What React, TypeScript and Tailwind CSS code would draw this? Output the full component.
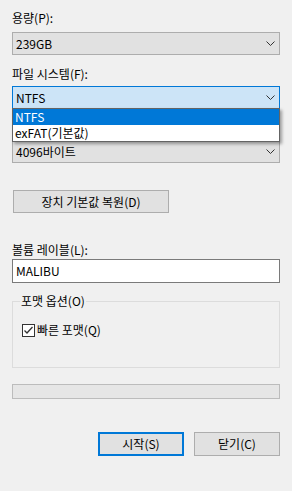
import React from 'react';

const font = "font-['Noto_Sans_CJK_KR','Noto_Sans',sans-serif]";

function Chevron() {
  return (
    <svg width="9" height="5" viewBox="0 0 9 5" className="shrink-0">
      <path d="M0.5 0.5 L4.5 4.5 L8.5 0.5" fill="none" stroke="#333" strokeWidth="1" />
    </svg>
  );
}

function Label({ children, className = '' }: { children?: React.ReactNode; className?: string }) {
  return <div className={`h-[16px] leading-[16px] ${className}`}>{children}</div>;
}

function Combo({ value, className = '' }: { value: string; className?: string }) {
  return (
    <div
      className={`h-[23px] border border-[#adadad] bg-[#e1e1e1] flex items-center justify-between pl-[3px] pr-[4px] ${className}`}
    >
      <span className="leading-[16px]">{value}</span>
      <Chevron />
    </div>
  );
}

export default function App() {
  return (
    <div className={`w-[292px] h-[491px] bg-[#f0f0f0] px-3 pt-[10px] text-[12px] text-black ${font}`}>
      <Label>용량(P):</Label>
      <Combo value="239GB" className="mt-[6px]" />

      <Label className="mt-[11px]">파일 시스템(F):</Label>
      <div className="relative mt-[4px] z-10">
        <div className="h-[23px] border border-[#0078d7] bg-[#cce4f7] flex items-center justify-between pl-[3px] pr-[4px]">
          <span className="leading-[16px]">NTFS</span>
          <Chevron />
        </div>
        {/* open dropdown list, lies over the next row */}
        <div className="absolute left-0 right-0 top-[22px] border border-[#646464] bg-white shadow-[2px_2px_3px_rgba(0,0,0,0.35)]">
          <div className="h-[16px] leading-[16px] bg-[#0078d7] text-white pl-[2px]">NTFS</div>
          <div className="h-[16px] leading-[16px] pl-[2px]">exFAT(기본값)</div>
        </div>
      </div>

      {/* label hidden under the dropdown */}
      <Label className="mt-[11px]" />
      <Combo value="4096바이트" className="mt-[4px]" />

      <button className="block mt-[27px] ml-px w-[156px] h-[23px] border border-[#adadad] bg-[#e1e1e1] leading-[16px]">
        장치 기본값 복원(D)
      </button>

      <Label className="mt-[29px]">볼륨 레이블(L):</Label>
      <div className="mt-[1px] h-[24px] border border-[#7a7a7a] bg-white flex items-center pl-[3px]">
        <span className="leading-[16px]">MALIBU</span>
      </div>

      <div className="relative mt-[18px] h-[67px] border border-[#dcdcdc] pl-[9px] pt-[20px]">
        <span className="absolute -top-[9px] left-[7px] px-[1px] bg-[#f0f0f0] leading-[16px]">포맷 옵션(O)</span>
        <div className="flex items-center gap-[2px]">
          <div className="w-[13px] h-[13px] border border-[#333] bg-white flex items-center justify-center">
            <svg width="11" height="11" viewBox="0 0 11 11">
              <path d="M1.5 5.5 L4 8 L9.5 2" fill="none" stroke="#333" strokeWidth="1.3" />
            </svg>
          </div>
          <span className="leading-[16px]">빠른 포맷(Q)</span>
        </div>
      </div>

      <div className="mt-[16px] h-[15px] border border-[#bcbcbc] bg-[#e6e6e6]" />

      <div className="mt-[33px] flex justify-end gap-[10px]">
        <button className="w-[86px] h-[24px] border-2 border-[#0078d7] bg-[#e1e1e1] leading-[16px]">시작(S)</button>
        <button className="w-[86px] h-[24px] border border-[#adadad] bg-[#e1e1e1] leading-[16px]">닫기(C)</button>
      </div>
    </div>
  );
}
